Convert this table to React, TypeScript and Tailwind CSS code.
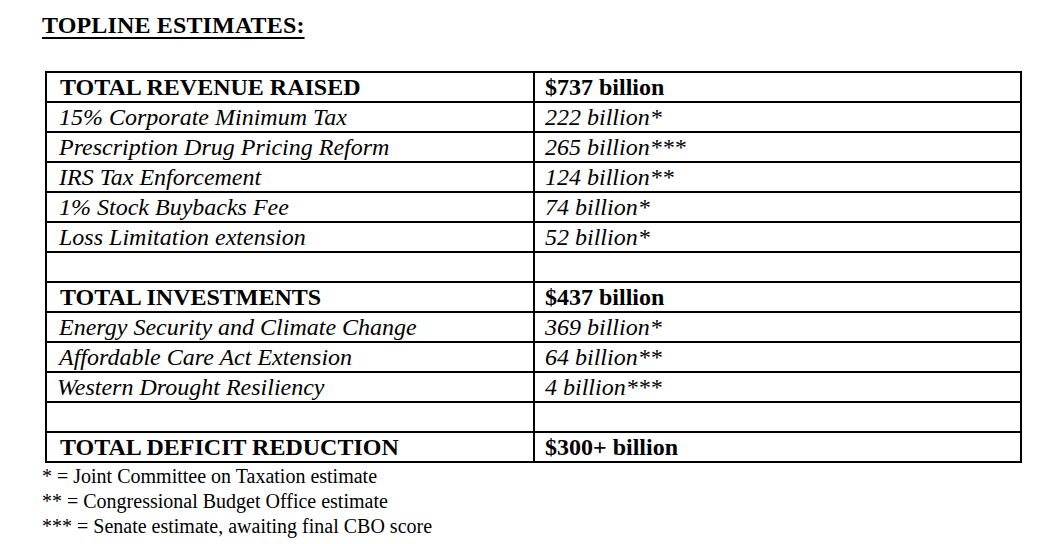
import React from "react";

type Row = { label: string; value: string; kind: "head" | "item" | "blank"; indent?: boolean };

const rows: Row[] = [
  { label: "TOTAL REVENUE RAISED", value: "$737 billion", kind: "head" },
  { label: "15% Corporate Minimum Tax", value: "222 billion*", kind: "item" },
  { label: "Prescription Drug Pricing Reform", value: "265 billion***", kind: "item" },
  { label: "IRS Tax Enforcement", value: "124 billion**", kind: "item" },
  { label: "1% Stock Buybacks Fee", value: "74 billion*", kind: "item" },
  { label: "Loss Limitation extension", value: "52 billion*", kind: "item" },
  { label: "", value: "", kind: "blank" },
  { label: "TOTAL INVESTMENTS", value: "$437 billion", kind: "head" },
  { label: "Energy Security and Climate Change", value: "369 billion*", kind: "item" },
  { label: "Affordable Care Act Extension", value: "64 billion**", kind: "item" },
  { label: "Western Drought Resiliency", value: "4 billion***", kind: "item", indent: true },
  { label: "", value: "", kind: "blank" },
  { label: "TOTAL DEFICIT REDUCTION", value: "$300+ billion", kind: "head" },
];

function App() {
  return (
    <div className="w-[1046px] h-[544px] bg-white text-black font-['Liberation_Serif',serif] overflow-hidden">
      <div className="pl-[42px] pt-[13px]">
        <h1 className="text-[24px] leading-[24px] font-bold underline decoration-2 underline-offset-[4px] tracking-[0.15px]">
          TOPLINE ESTIMATES:
        </h1>
      </div>
      <table className="ml-[45px] mt-[34px] w-[977px] table-fixed border-collapse">
        <colgroup>
          <col className="w-[488px]" />
          <col />
        </colgroup>
        <tbody>
          {rows.map((r, i) => {
            const font =
              r.kind === "head" ? "font-bold" : r.kind === "item" ? "italic" : "";
            return (
              <tr key={i} className="h-[30px]">
                <td
                  className={`border-2 border-black p-0 text-[24px] leading-[24px] ${font} ${
                    r.indent ? "pl-[10px]" : r.kind === "head" ? "pl-[13px]" : "pl-[12px]"
                  }`}
                >
                  {r.label}
                </td>
                <td className={`border-2 border-black p-0 pl-[10px] text-[24px] leading-[24px] ${font}`}>
                  {r.value}
                </td>
              </tr>
            );
          })}
        </tbody>
      </table>
      <div className="pl-[42px] pt-[1px] text-[20px] leading-[25px]">
        <p>* = Joint Committee on Taxation estimate</p>
        <p>** = Congressional Budget Office estimate</p>
        <p>*** = Senate estimate, awaiting final CBO score</p>
      </div>
    </div>
  );
}

export default App;
